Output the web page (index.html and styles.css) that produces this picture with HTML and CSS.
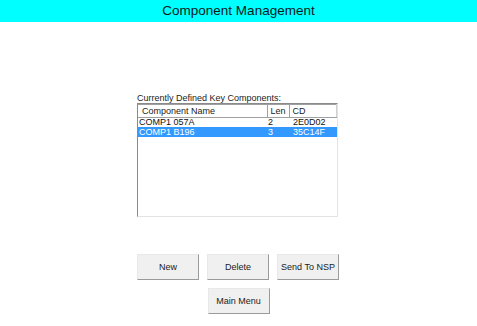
FILE: index.html
```html
<!DOCTYPE html>
<html lang="en">
<head>
    <meta charset="UTF-8">
    <title>Component Management</title>
    <link rel="stylesheet" href="styles.css">
</head>
<body>
    <div class="title-bar">Component Management</div>
    <div class="content">
        <div class="list-label">Currently Defined Key Components:</div>
        <div class="list-box">
            <table class="comp-table">
                <thead>
                    <tr>
                        <th class="col-name">Component Name</th>
                        <th class="col-len">Len</th>
                        <th class="col-cd">CD</th>
                    </tr>
                </thead>
                <tbody>
                    <tr>
                        <td>COMP1 057A</td>
                        <td>2</td>
                        <td>2E0D02</td>
                    </tr>
                    <tr class="selected">
                        <td>COMP1 B196</td>
                        <td>3</td>
                        <td>35C14F</td>
                    </tr>
                </tbody>
            </table>
        </div>
        <div class="button-row">
            <button class="btn">New</button>
            <button class="btn">Delete</button>
            <button class="btn">Send To NSP</button>
        </div>
        <div class="button-row center">
            <button class="btn">Main Menu</button>
        </div>
    </div>
</body>
</html>
```

FILE: styles.css
```css
* {
    margin: 0;
    padding: 0;
    box-sizing: border-box;
}

body {
    background-color: #fff;
    font-family: 'Liberation Sans', Arial, sans-serif;
    color: #111;
}

.title-bar {
    height: 22px;
    line-height: 21px;
    background-color: #00ffff;
    text-align: center;
    font-size: 13.5px;
    color: #0a1a1a;
}

.content {
    width: 203px;
    margin: 71px auto 0;
}

.list-label {
    font-size: 9px;
    line-height: 10px;
    color: #222;
}

.list-box {
    width: 201px;
    height: 114px;
    border: 1px solid;
    border-color: #8a8a8a #e3e3e3 #e3e3e3 #8a8a8a;
    background: #fff;
}

.comp-table {
    width: 100%;
    border-collapse: collapse;
    font-size: 9px;
}

.comp-table th {
    font-weight: normal;
    text-align: left;
    height: 13px;
    padding: 0 3px;
    border: 1px solid #a0a0a0;
    color: #222;
}

.comp-table th.col-name {
    width: 129px;
    border-left: none;
    padding-left: 4px;
}

.comp-table th.col-len {
    width: 22px;
}

.comp-table th.col-cd {
    border-right: 1px solid #d0d0d0;
}

.comp-table td {
    height: 9px;
    line-height: 9px;
    padding: 0 1px;
    color: #111;
}

.comp-table tr.selected td {
    height: 10px;
}

.comp-table td:nth-child(3) {
    padding-left: 4px;
}

.comp-table tr.selected td {
    background-color: #3399ff;
    color: #fff;
}

.button-row {
    display: flex;
    gap: 8px;
    margin-top: 37px;
}

.button-row.center {
    justify-content: center;
    margin-top: 8px;
}

.btn {
    width: 62px;
    height: 26px;
    background: #f0f0f0;
    border: 1px solid;
    border-color: #e8e8e8 #9a9a9a #9a9a9a #e8e8e8;
    font-family: 'Liberation Sans', Arial, sans-serif;
    font-size: 9px;
    color: #222;
}
```
